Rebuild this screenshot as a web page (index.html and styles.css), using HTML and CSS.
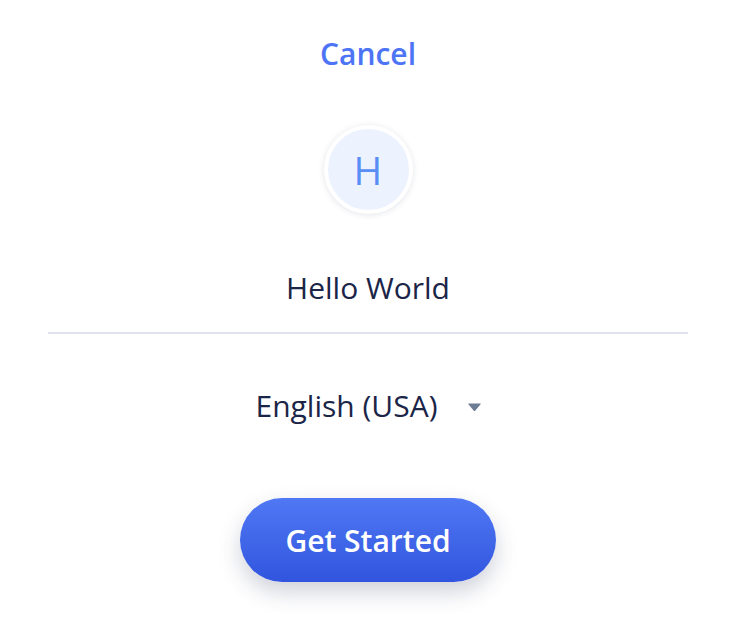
FILE: index.html
```html
<!DOCTYPE html>
<html lang="en">
<head>
<meta charset="utf-8">
<title>Welcome</title>
<link rel="stylesheet" href="styles.css">
</head>
<body>
<main class="screen">
  <a class="cancel" href="#">Cancel</a>
  <div class="avatar"><span class="avatar-letter">H</span></div>
  <div class="name">Hello World</div>
  <hr class="divider">
  <div class="language">
    <span class="language-label">English (USA)</span>
    <svg class="caret" width="15" height="10" viewBox="0 0 15 10" aria-hidden="true">
      <path d="M2 1.5 H13 Q14.2 1.5 13.4 2.6 L8.4 8.4 Q7.5 9.4 6.6 8.4 L1.6 2.6 Q0.8 1.5 2 1.5 Z" fill="#6b7c93"/>
    </svg>
  </div>
  <button class="start" type="button">Get Started</button>
</main>
</body>
</html>
```

FILE: styles.css
```css
html, body {
  margin: 0;
  padding: 0;
  background: #ffffff;
}

body {
  font-family: "Open Sans", "Noto Sans", sans-serif;
  color: #1b2548;
}

.screen {
  display: flex;
  flex-direction: column;
  align-items: center;
  padding-top: 33px;
  padding-bottom: 36px;
}

.cancel {
  font-size: 30px;
  font-weight: 600;
  color: #4d74f4;
  text-decoration: none;
  line-height: 41px;
}

.avatar {
  margin-top: 51px;
  width: 81px;
  height: 81px;
  border-radius: 50%;
  border: 4px solid #ffffff;
  background: #edf3fe;
  box-shadow: 0 1px 6px rgba(30, 40, 80, 0.12);
  display: flex;
  align-items: center;
  justify-content: center;
}

.avatar-letter {
  font-size: 39px;
  font-weight: 400;
  color: #5a8ef7;
  line-height: 1;
}

.name {
  margin-top: 53px;
  font-size: 30px;
  line-height: 41px;
  color: #1b2548;
}

.divider {
  align-self: stretch;
  margin: 24px 48px 0;
  border: 0;
  height: 2px;
  background: #dfe2ee;
}

.language {
  margin-top: 51px;
  display: flex;
  align-items: center;
  gap: 30px;
  padding-left: 2px;
}

.language-label {
  font-size: 30px;
  line-height: 41px;
  color: #1b2548;
}

.caret {
  display: block;
  margin-top: 2px;
}

.start {
  margin-top: 72px;
  width: 256px;
  height: 84px;
  border: 0;
  border-radius: 42px;
  background: linear-gradient(180deg, #5078f4 0%, #3155de 100%);
  color: #ffffff;
  font-family: "Open Sans", "Noto Sans", sans-serif;
  font-size: 30px;
  font-weight: 600;
  box-shadow: 0 10px 22px rgba(40, 50, 90, 0.22);
  cursor: pointer;
}
```
